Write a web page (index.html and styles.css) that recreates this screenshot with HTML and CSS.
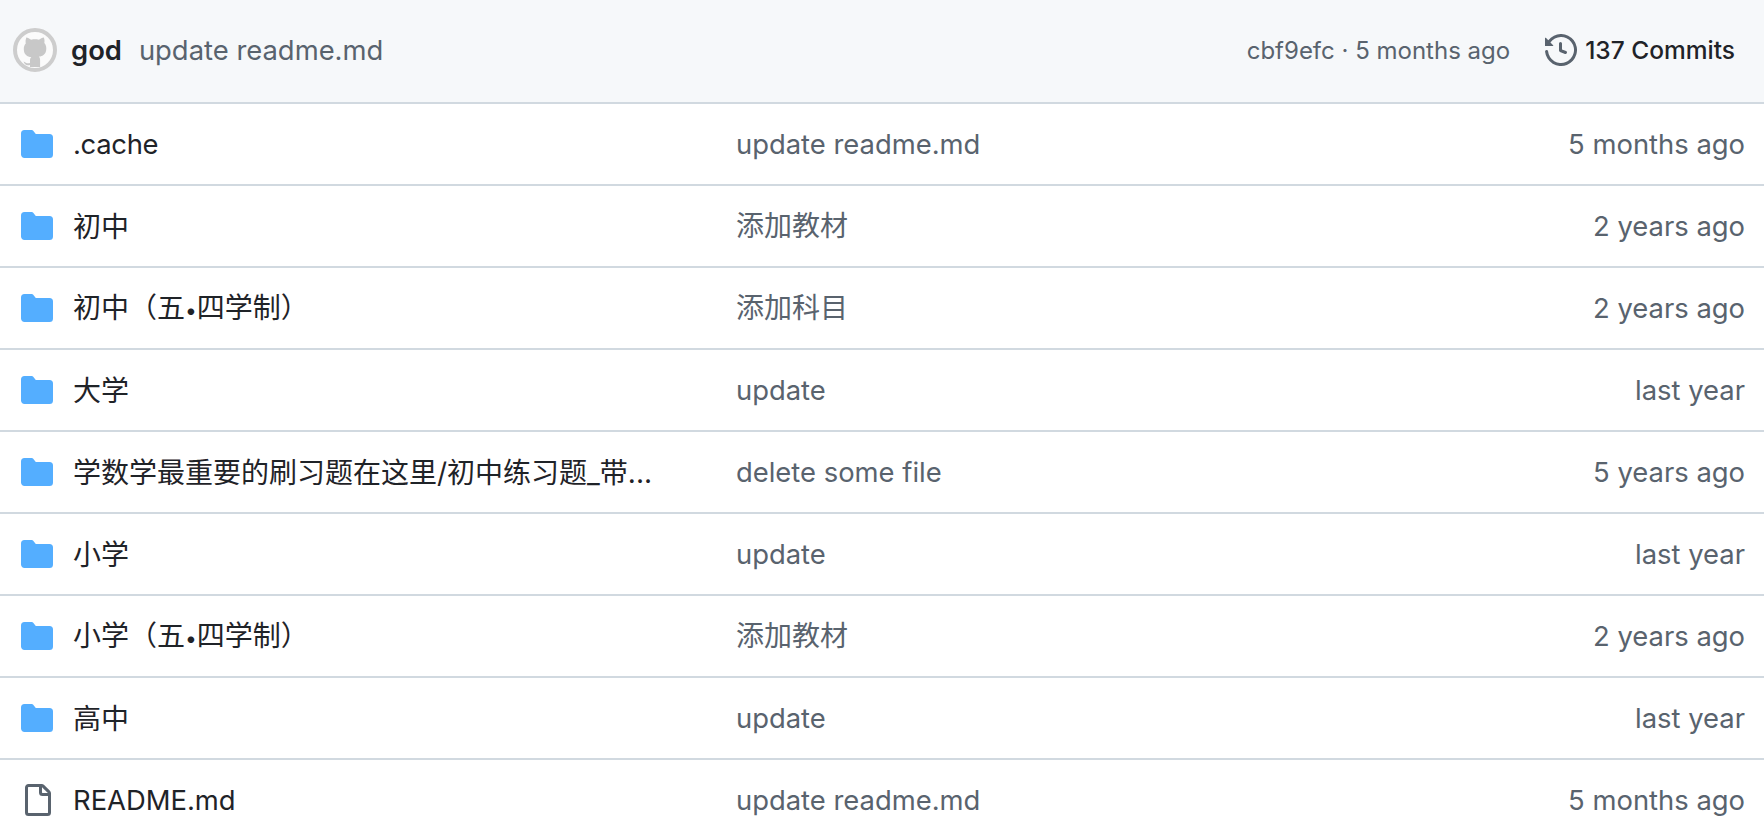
FILE: index.html
```html
<!DOCTYPE html>
<html lang="zh-CN">
<head>
    <meta charset="UTF-8">
    <title>Files</title>
    <link rel="stylesheet" href="styles.css">
</head>
<body>
    <div class="commit-bar">
        <svg class="avatar" viewBox="0 0 44 44">
            <circle cx="22" cy="22" r="20" fill="#fbfbfb" stroke="#cdcdcd" stroke-width="4"/>
            <path fill="#c8c8c8" d="M13.200 9.500c1.600 0 3.300 1.200 4.900 2.300 2.600-.6 5.200-.6 7.800 0 1.600-1.100 3.300-2.300 4.900-2.300.8 2 .9 3.800.5 5.600 1.300 1.400 2 3.200 2 5.300 0 5.800-3.500 7.700-7.500 8.200.9.800 1.300 2 1.300 3.600V39H17v-2c-3.500 1-5.500-.5-6.500-3.500 2 1 4 2.500 6.500 1.500v-2.300c0-1.600.4-2.800 1.300-3.600-4-.5-7.500-2.400-7.500-8.200 0-2.100.7-3.900 2-5.300-.4-1.800-.3-3.600.4-5.600z"/>
        </svg>
        <span class="author">god</span>
        <span class="commit-msg">update readme.md</span>
        <span class="commit-meta">cbf9efc · 5 months ago</span>
        <span class="commit-count">
            <svg class="icon-history" viewBox="0 0 16 16"><path fill="#59636e" d="m.427 1.927 1.215 1.215a8.002 8.002 0 1 1-1.600 5.685.75.75 0 1 1 1.493-.154 6.500 6.500 0 1 0 1.180-4.458l1.358 1.358A.25.25 0 0 1 3.896 6H.25A.25.25 0 0 1 0 5.750V2.104a.25.25 0 0 1 .427-.177ZM7.750 4a.75.75 0 0 1 .75.75v2.992l2.028.812a.75.75 0 0 1-.557 1.392l-2.500-1A.751.751 0 0 1 7 8.250v-3.500A.75.75 0 0 1 7.750 4Z"/></svg>
            137 Commits
        </span>
    </div>

    <div class="file-row">
        <span class="file-name"><svg class="icon" viewBox="0 0 16 16"><path class="folder" d="M1.750 1A1.750 1.750 0 0 0 0 2.750v10.500C0 14.216.784 15 1.750 15h12.500A1.750 1.750 0 0 0 16 13.250v-8.500A1.750 1.750 0 0 0 14.250 3H7.500a.25.25 0 0 1-.2-.1l-.9-1.200C6.070 1.220 5.550 1 5 1H1.750Z"/></svg><span class="latin-name">.cache</span></span>
        <span class="file-msg">update readme.md</span>
        <span class="file-age">5 months ago</span>
    </div>
    <div class="file-row">
        <span class="file-name"><svg class="icon" viewBox="0 0 16 16"><path class="folder" d="M1.750 1A1.750 1.750 0 0 0 0 2.750v10.500C0 14.216.784 15 1.750 15h12.500A1.750 1.750 0 0 0 16 13.250v-8.500A1.750 1.750 0 0 0 14.250 3H7.500a.25.25 0 0 1-.2-.1l-.9-1.200C6.070 1.220 5.550 1 5 1H1.750Z"/></svg><span class="cjk">初中</span></span>
        <span class="file-msg cjk">添加教材</span>
        <span class="file-age">2 years ago</span>
    </div>
    <div class="file-row">
        <span class="file-name"><svg class="icon" viewBox="0 0 16 16"><path class="folder" d="M1.750 1A1.750 1.750 0 0 0 0 2.750v10.500C0 14.216.784 15 1.750 15h12.500A1.750 1.750 0 0 0 16 13.250v-8.500A1.750 1.750 0 0 0 14.250 3H7.500a.25.25 0 0 1-.2-.1l-.9-1.200C6.070 1.220 5.550 1 5 1H1.750Z"/></svg><span class="cjk">初中（五<span class="dot">•</span>四学制）</span></span>
        <span class="file-msg cjk">添加科目</span>
        <span class="file-age">2 years ago</span>
    </div>
    <div class="file-row">
        <span class="file-name"><svg class="icon" viewBox="0 0 16 16"><path class="folder" d="M1.750 1A1.750 1.750 0 0 0 0 2.750v10.500C0 14.216.784 15 1.750 15h12.500A1.750 1.750 0 0 0 16 13.250v-8.500A1.750 1.750 0 0 0 14.250 3H7.500a.25.25 0 0 1-.2-.1l-.9-1.200C6.070 1.220 5.550 1 5 1H1.750Z"/></svg><span class="cjk">大学</span></span>
        <span class="file-msg">update</span>
        <span class="file-age">last year</span>
    </div>
    <div class="file-row">
        <span class="file-name"><svg class="icon" viewBox="0 0 16 16"><path class="folder" d="M1.750 1A1.750 1.750 0 0 0 0 2.750v10.500C0 14.216.784 15 1.750 15h12.500A1.750 1.750 0 0 0 16 13.250v-8.500A1.750 1.750 0 0 0 14.250 3H7.500a.25.25 0 0 1-.2-.1l-.9-1.200C6.070 1.220 5.550 1 5 1H1.750Z"/></svg><span class="cjk">学数学最重要的刷习题在这里/初中练习题_带...</span></span>
        <span class="file-msg">delete some file</span>
        <span class="file-age">5 years ago</span>
    </div>
    <div class="file-row">
        <span class="file-name"><svg class="icon" viewBox="0 0 16 16"><path class="folder" d="M1.750 1A1.750 1.750 0 0 0 0 2.750v10.500C0 14.216.784 15 1.750 15h12.500A1.750 1.750 0 0 0 16 13.250v-8.500A1.750 1.750 0 0 0 14.250 3H7.500a.25.25 0 0 1-.2-.1l-.9-1.200C6.070 1.220 5.550 1 5 1H1.750Z"/></svg><span class="cjk">小学</span></span>
        <span class="file-msg">update</span>
        <span class="file-age">last year</span>
    </div>
    <div class="file-row">
        <span class="file-name"><svg class="icon" viewBox="0 0 16 16"><path class="folder" d="M1.750 1A1.750 1.750 0 0 0 0 2.750v10.500C0 14.216.784 15 1.750 15h12.500A1.750 1.750 0 0 0 16 13.250v-8.500A1.750 1.750 0 0 0 14.250 3H7.500a.25.25 0 0 1-.2-.1l-.9-1.200C6.070 1.220 5.550 1 5 1H1.750Z"/></svg><span class="cjk">小学（五<span class="dot">•</span>四学制）</span></span>
        <span class="file-msg cjk">添加教材</span>
        <span class="file-age">2 years ago</span>
    </div>
    <div class="file-row">
        <span class="file-name"><svg class="icon" viewBox="0 0 16 16"><path class="folder" d="M1.750 1A1.750 1.750 0 0 0 0 2.750v10.500C0 14.216.784 15 1.750 15h12.500A1.750 1.750 0 0 0 16 13.250v-8.500A1.750 1.750 0 0 0 14.250 3H7.500a.25.25 0 0 1-.2-.1l-.9-1.200C6.070 1.220 5.550 1 5 1H1.750Z"/></svg><span class="cjk">高中</span></span>
        <span class="file-msg">update</span>
        <span class="file-age">last year</span>
    </div>
    <div class="file-row">
        <span class="file-name"><svg class="icon" viewBox="0 0 16 16"><path fill="#59636e" d="M2 1.750C2 .784 2.784 0 3.750 0h6.586c.464 0 .909.184 1.237.513l2.914 2.914c.329.328.513.773.513 1.237v9.586A1.750 1.750 0 0 1 13.250 16h-9.500A1.750 1.750 0 0 1 2 14.250Zm1.750-.25a.25.25 0 0 0-.25.25v12.500c0 .138.112.25.25.25h9.500a.25.25 0 0 0 .25-.25V6h-2.750A1.750 1.750 0 0 1 9 4.250V1.500Zm6.750.062V4.250c0 .138.112.25.25.25h2.688l-.011-.013-2.914-2.914-.013-.011Z"/></svg><span>README.md</span></span>
        <span class="file-msg">update readme.md</span>
        <span class="file-age">5 months ago</span>
    </div>
</body>
</html>
```

FILE: styles.css
```css
body {
    margin: 0;
    height: 832px;
    overflow: hidden;
    background: #fff;
    font-family: Inter, "Noto Sans CJK SC", sans-serif;
    font-size: 27.4px;
    color: #1f2328;
}
.commit-bar {
    display: flex;
    align-items: center;
    height: 100px;
    padding: 0 29px 2px 13px;
    background: #f6f8fa;
    border-bottom: 2px solid #d1d9e0;
}
.avatar {
    width: 44px;
    height: 44px;
    margin-right: 14px;
}
.author {
    font-weight: 600;
    margin-right: 17px;
}
.commit-msg {
    color: #59636e;
}
.commit-meta {
    margin-left: auto;
    margin-right: 35px;
    color: #59636e;
    font-size: 24px;
}
.commit-count {
    display: flex;
    align-items: center;
    gap: 8px;
    font-size: 24.5px;
    font-weight: 500;
}
.icon-history {
    width: 32px;
    height: 32px;
}
.file-row {
    display: grid;
    grid-template-columns: 715px 1fr auto;
    align-items: center;
    height: 80px;
    padding: 0 19px 0 21px;
    border-bottom: 2px solid #d1d9e0;
}
.file-row:last-child {
    border-bottom: none;
}
.file-name {
    display: flex;
    align-items: center;
}
.latin-name {
    letter-spacing: -0.3px;
}
.cjk {
    font-size: 28px;
    line-height: 28px;
}
.file-name .cjk {
    padding-top: 2px;
}
.dot {
    font-size: 21px;
}
.icon {
    width: 32px;
    height: 32px;
    margin-right: 20px;
}
.folder {
    fill: #54aeff;
}
.file-msg,
.file-age {
    color: #59636e;
}
```
